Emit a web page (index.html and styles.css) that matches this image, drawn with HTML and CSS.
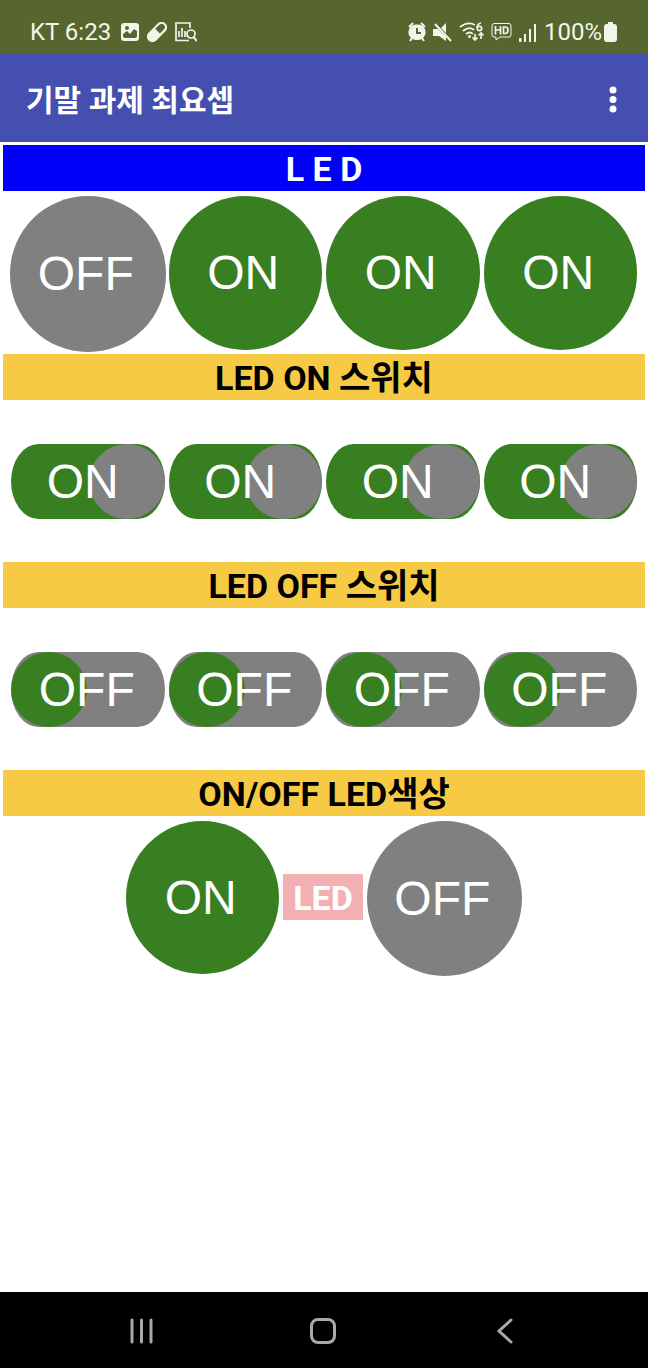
FILE: index.html
```html
<!DOCTYPE html>
<html lang="ko">
<head>
<meta charset="utf-8">
<meta name="viewport" content="width=device-width, initial-scale=1">
<title>기말 과제 최요셉</title>
<link rel="stylesheet" href="styles.css">
</head>
<body>
<div class="status-bar">
  <div class="status-left">
    <span>KT 6:23</span>
    <svg class="icon-photo" width="18" height="18" viewBox="0 0 18 18"><path fill-rule="evenodd" d="M3 0H15Q18 0 18 3V15Q18 18 15 18H3Q0 18 0 15V3Q0 0 3 0ZM2 13Q2 15 4 15H14Q16 15 16 13V8L13 6L9 11L6 8L2 11ZM6 3A2 2 0 1 0 6 7A2 2 0 1 0 6 3Z"/></svg>
    <svg class="icon-pill" width="20" height="20" viewBox="0 0 20 20"><g transform="rotate(-45 10 10)"><rect x="-2" y="4.500" width="24" height="11" rx="5.500"/><path class="cut" d="M11 6.500H16Q20 6.500 20 10Q20 13 16 13H11Z"/></g></svg>
    <svg class="icon-report" width="22" height="20" viewBox="0 0 22 20"><path class="line slim" d="M15 6V1H1V18.500H14M4 15V9M7 15V6M10 15V9M12.500 15V13"/><circle class="line slim" cx="16" cy="12" r="4"/><path class="line" d="M18.500 15L22 19"/></svg>
  </div>
  <div class="status-right">
    <svg width="18" height="20" viewBox="0 0 18 20"><path class="line" d="M1 5L5 1M17 5L13 1M4 16L2 19M14 16L16 19"/><path fill-rule="evenodd" d="M9 2.500A7.800 7.800 0 1 0 9 18A7.800 7.800 0 1 0 9 2.500ZM8 6H10V10H13V12H8Z"/></svg>
    <svg width="19" height="19" viewBox="0 0 19 19"><path d="M8 5L13 0V10ZM0 6H5L13 14V18L6 13H0Z"/><path class="line" d="M2 1L18 18"/></svg>
    <svg width="25" height="20" viewBox="0 0 25 20"><path class="line slim" d="M1 5Q9-1 16 3M4 9Q10 4 15 8M7 12Q11 9 14 12"/><circle cx="10.500" cy="14.500" r="1.500"/><path class="line slim" d="M22 1Q18 2 18 6M16 12V18M13.500 15.500L16 18L18.500 15.500M22 17V11M19.500 13.500L22 11L24.500 13.500"/><circle class="line slim" cx="20.500" cy="6.500" r="2.200"/></svg>
    <svg width="21" height="20" viewBox="0 0 21 20"><path class="line thin" d="M3 1.500H18Q20 1.500 20 4V13Q20 15 18 15H9L5 18V15H3Q1 15 1 13V4Q1 1.500 3 1.500Z"/><path class="line slim" d="M4.500 4V12.500M9.500 4V12.500M4.500 8H9.500M12.500 5V11.500H14Q17 11.500 17 8.300Q17 5 14 5Z"/></svg>
    <svg width="18" height="19" viewBox="0 0 18 19"><path d="M0 15H2.500V19H0ZM5 11H7V19H5ZM10 6H12V19H10ZM15 1H17V19H15Z"/></svg>
    <span class="battery">100%<svg width="13" height="20" viewBox="0 0 13 20"><path d="M4 0H9V2H10Q13 2 13 5V17Q13 20 10 20H3Q0 20 0 17V5Q0 2 3 2H4Z"/></svg></span>
  </div>
</div>
<header class="app-bar">
  <h1>기말 과제 최요셉</h1>
  <button class="menu" type="button" aria-label="메뉴"><svg width="8" height="28" viewBox="0 0 8 28"><circle cx="4" cy="3" r="3.500"/><circle cx="4" cy="12.500" r="3.500"/><circle cx="4" cy="22" r="3.500"/></svg></button>
</header>
<main>
  <h2 class="band band-main">L E D</h2>
  <div class="row">
    <button type="button" class="lamp lamp-off">OFF</button>
    <button type="button" class="lamp">ON</button>
    <button type="button" class="lamp">ON</button>
    <button type="button" class="lamp">ON</button>
  </div>
  <h2 class="band">LED ON 스위치</h2>
  <div class="row row-switch">
    <button type="button" class="switch"><span>ON</span></button>
    <button type="button" class="switch"><span>ON</span></button>
    <button type="button" class="switch"><span>ON</span></button>
    <button type="button" class="switch"><span>ON</span></button>
  </div>
  <h2 class="band">LED OFF 스위치</h2>
  <div class="row row-switch">
    <button type="button" class="switch switch-off"><span>OFF</span></button>
    <button type="button" class="switch switch-off"><span>OFF</span></button>
    <button type="button" class="switch switch-off"><span>OFF</span></button>
    <button type="button" class="switch switch-off"><span>OFF</span></button>
  </div>
  <h2 class="band">ON/OFF LED색상</h2>
  <div class="all">
    <button type="button" class="lamp">ON</button>
    <span class="tag">LED</span>
    <button type="button" class="lamp lamp-off">OFF</button>
  </div>
</main>
<nav class="nav-bar">
  <button type="button" aria-label="최근 앱"><svg width="26" height="26" viewBox="0 0 26 26"><path d="M3 2V24M12.500 2V24M22 2V24"/></svg></button>
  <button type="button" aria-label="홈"><svg width="26" height="26" viewBox="0 0 26 26"><rect x="1.500" y="1.500" width="23" height="23" rx="6.500"/></svg></button>
  <button type="button" aria-label="뒤로"><svg width="26" height="26" viewBox="0 0 26 26"><path d="M20 2L8 13L20 24"/></svg></button>
</nav>
</body>
</html>
```
FILE: styles.css
```css
* {
  box-sizing: border-box;
}

body {
  margin: 0;
  min-height: 100vh;
  display: flex;
  flex-direction: column;
  background: #fff;
  font-family: Roboto, "Noto Sans CJK KR", sans-serif;
}

button {
  border: 0;
  padding: 0;
  background: none;
  cursor: pointer;
}

svg {
  display: block;
  flex: none;
}

.status-bar {
  display: flex;
  justify-content: space-between;
  align-items: center;
  height: 54px;
  padding: 10px 31px 0 30px;
  background: #57652f;
  color: #f3f5ea;
  font-size: 24px;
  line-height: 28px;
}

.status-bar svg {
  fill: currentColor;
}

.status-bar .line {
  fill: none;
  stroke: currentColor;
  stroke-width: 2;
}

.status-bar .thin {
  stroke-width: 1;
}

.status-bar .cut {
  fill: #57652f;
}

.status-left,
.status-right,
.battery {
  display: flex;
  align-items: center;
}

.status-left {
  gap: 8px;
}

.status-left span {
  margin-right: 2px;
}

.status-right {
  gap: 7px;
}

.battery {
  gap: 2px;
}

.app-bar {
  display: flex;
  justify-content: space-between;
  align-items: center;
  height: 88px;
  padding: 5px 31px 0 26px;
  background: #444faf;
  color: #fff;
}

.app-bar h1 {
  margin: 0;
  font-size: 30px;
  line-height: 40px;
  font-weight: 700;
}

.menu {
  fill: #fff;
}

.menu svg {
  overflow: visible;
}

main {
  flex: 1;
  padding: 3px;
}

.band,
.tag {
  margin: 0;
  height: 46px;
  font-size: 34px;
  line-height: 48px;
  font-weight: 700;
  text-align: center;
}

.band {
  background: #f6ca45;
  color: #000;
}

.band-main {
  background: #0000f8;
  color: #fff;
}

.row {
  display: grid;
  grid-template-columns: repeat(4, minmax(0, 1fr));
  align-items: start;
  gap: 4px;
  height: 163px;
  padding: 5px 8px;
}

.row-switch {
  height: 162px;
  align-items: center;
}

.lamp,
.switch {
  color: #fff;
  font: 48px "Liberation Sans", Arial, sans-serif;
}

.lamp {
  aspect-ratio: 1;
  padding-right: 4px;
  border-radius: 50%;
  background: #387f22;
}

.lamp-off {
  background: #808080;
}

.row .lamp-off {
  margin: 0 -1px;
}

.switch {
  position: relative;
  height: 75px;
  padding-right: 10px;
  border-radius: 28px / 38px;
  background: #387f22;
}

.switch::before {
  content: "";
  position: absolute;
  top: 0;
  right: 0;
  width: 76px;
  height: 75px;
  border-radius: 50%;
  background: #808080;
}

.switch span {
  position: relative;
}

.switch-off {
  padding-right: 2px;
  background: #808080;
}

.switch-off::before {
  right: auto;
  left: 0;
  background: #387f22;
}

.all {
  display: flex;
  justify-content: center;
  align-items: flex-start;
  gap: 4px;
  padding-top: 5px;
}

.all .lamp {
  width: 153px;
}

.all .lamp-off {
  width: 155px;
}

.tag {
  align-self: center;
  margin-bottom: 4px;
  padding: 0 10px;
  background: #f3b0b2;
  color: #fff;
}

.nav-bar {
  display: grid;
  grid-template-columns: repeat(3, 1fr);
  height: 76px;
  padding: 2px 53px 0 51px;
  background: #000;
}

.nav-bar button {
  display: flex;
  justify-content: center;
  align-items: center;
}

.nav-bar svg {
  fill: none;
  stroke: #a9a9a9;
  stroke-width: 3;
  stroke-linecap: round;
}

.status-bar .slim {
  stroke-width: 1.7;
}
```
